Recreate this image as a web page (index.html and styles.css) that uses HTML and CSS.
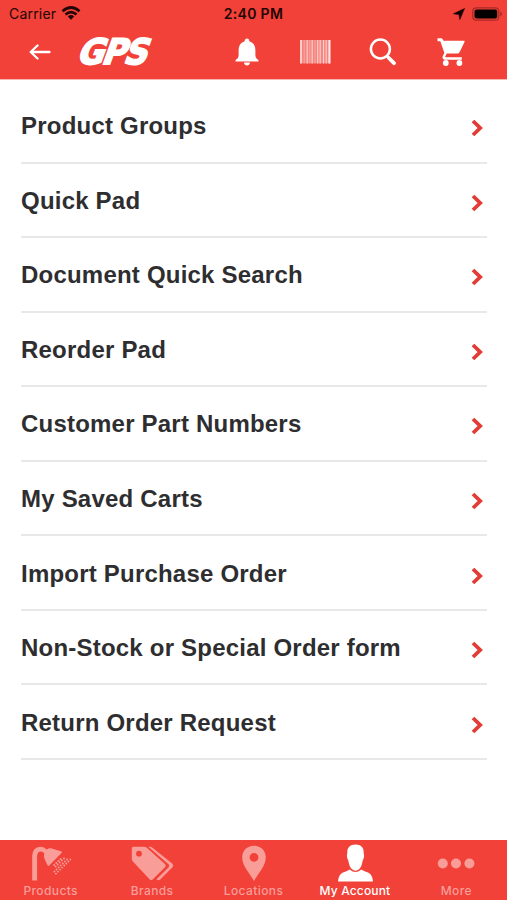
FILE: index.html
```
<!DOCTYPE html>
<html lang="en">

<head>
    <meta charset="UTF-8">
    <meta name="viewport" content="width=device-width, initial-scale=1.0">
    <title>My Account</title>
    <link rel="stylesheet" href="styles.css">
</head>

<body>
    <header class="header">
        <div class="status-bar">
            <div class="carrier">
                <span>Carrier</span>
                <svg width="20" height="15" viewBox="0 0 20 15" fill="none" stroke="#230605" stroke-width="2.7">
                    <path d="M1.5 5.2Q10-2.2 18.5 5.2M4.5 8.5Q10 3.6 15.5 8.5" />
                    <path d="M6.8 10.4Q10 7.8 13.2 10.4L10 13.8Z" fill="#230605" stroke="none" />
                </svg>
            </div>
            <div class="time">2:40 PM</div>
            <div class="battery">
                <svg width="12" height="12" viewBox="0 0 12 12" fill="#150202" stroke="#150202" stroke-width=".6">
                    <path d="M11.5.5L6.8 11.5L6 6.5L.5 5.8Z" />
                </svg>
                <svg width="31" height="14" viewBox="0 0 31 14">
                    <rect x=".8" y=".8" width="26" height="12.4" rx="3.5" fill="none" stroke="#a92a26" stroke-width="1.2" />
                    <rect x="2.5" y="2.4" width="22.7" height="9.2" rx="2" fill="#050000" />
                    <path d="M28.2 4.7Q30 5.3 30 7T28.2 9.3Z" fill="#a92a26" />
                </svg>
            </div>
        </div>
        <nav class="toolbar">
            <a href="#back" class="back" aria-label="Back">
                <svg width="22" height="16" viewBox="0 0 22 16" fill="none" stroke="#fff" stroke-width="2.3" stroke-linecap="round" stroke-linejoin="round">
                    <path d="M8.5 1.5L1.7 8L8.5 14.5M2 8H20.5" />
                </svg>
            </a>
            <a href="#home" class="logo">GPS</a>
            <ul class="actions">
                <li><a href="#alerts" aria-label="Alerts">
                    <svg width="24" height="28" viewBox="0 0 24 28" fill="#fff">
                        <path d="M12 .5Q14.2.5 14.3 3.2Q20.2 4.8 20.4 12V18Q20.5 20.8 23.5 22.2V23.5H.5V22.2Q3.5 20.8 3.6 18V12Q3.8 4.8 9.7 3.2Q9.8.5 12 .5ZM9 24.6H15Q14.6 27.5 12 27.5T9 24.6Z" />
                    </svg>
                </a></li>
                <li><a href="#scan" aria-label="Scan">
                    <svg width="31" height="24" viewBox="0 0 31 24" stroke="#fff">
                        <rect width="31" height="23.5" fill="#fff" opacity=".35" stroke="none" />
                        <path d="M1 0V23.5" stroke-width="1.5" opacity=".8" />
                        <path d="M29.3 0V23.5" stroke-width="1.8" opacity=".8" />
                        <path d="M7.2 0V23.5M12.2 0V23.5M17.7 0V23.5M20.2 0V23.5M23.5 0V23.5M26.2 0V23.5" stroke-width="1.2" opacity=".6" />
                        <path d="M4.2 0V23.5M9.8 0V23.5M15 0V23.5" stroke-width="1" opacity=".3" />
                    </svg>
                </a></li>
                <li><a href="#search" aria-label="Search">
                    <svg width="28" height="28" viewBox="0 0 28 28" fill="none" stroke="#fff">
                        <circle cx="11.4" cy="11" r="9.5" stroke-width="2.5" />
                        <path d="M17.8 18L20 20.2" stroke-width="2.4" />
                        <path d="M19.8 20L25 25.2" stroke-width="3.8" stroke-linecap="round" />
                    </svg>
                </a></li>
                <li><a href="#cart" aria-label="Cart">
                    <svg width="28" height="28" viewBox="0 0 28 28" fill="#fff">
                        <path d="M.5.3H4.3Q5.3.3 5.7 1.3L6.4 2.8H27.5V4L22.7 14Q21.9 15.5 20.2 15.5H9.8L8.3 18.2Q8 19.2 9 19.2H24.8V21.7H8Q5.3 21.5 5.5 19Q5.6 17.8 7.4 15L3.3 3.3H.5Z" />
                        <circle cx="8.8" cy="25" r="2.9" />
                        <circle cx="22.4" cy="25" r="2.9" />
                    </svg>
                </a></li>
            </ul>
        </nav>
    </header>

    <main class="menu">
        <a href="#groups" class="menu-item"><span>Product Groups</span><svg class="chevron" viewBox="0 0 12 18"><path d="M2 2L9.2 9L2 16" /></svg></a>
        <a href="#quick-pad" class="menu-item"><span>Quick Pad</span><svg class="chevron" viewBox="0 0 12 18"><path d="M2 2L9.2 9L2 16" /></svg></a>
        <a href="#documents" class="menu-item"><span>Document Quick Search</span><svg class="chevron" viewBox="0 0 12 18"><path d="M2 2L9.2 9L2 16" /></svg></a>
        <a href="#reorder" class="menu-item"><span>Reorder Pad</span><svg class="chevron" viewBox="0 0 12 18"><path d="M2 2L9.2 9L2 16" /></svg></a>
        <a href="#part-numbers" class="menu-item"><span>Customer Part Numbers</span><svg class="chevron" viewBox="0 0 12 18"><path d="M2 2L9.2 9L2 16" /></svg></a>
        <a href="#saved-carts" class="menu-item"><span>My Saved Carts</span><svg class="chevron" viewBox="0 0 12 18"><path d="M2 2L9.2 9L2 16" /></svg></a>
        <a href="#import" class="menu-item"><span>Import Purchase Order</span><svg class="chevron" viewBox="0 0 12 18"><path d="M2 2L9.2 9L2 16" /></svg></a>
        <a href="#special-order" class="menu-item"><span>Non-Stock or Special Order form</span><svg class="chevron" viewBox="0 0 12 18"><path d="M2 2L9.2 9L2 16" /></svg></a>
        <a href="#returns" class="menu-item"><span>Return Order Request</span><svg class="chevron" viewBox="0 0 12 18"><path d="M2 2L9.2 9L2 16" /></svg></a>
    </main>

    <nav class="tab-bar">
        <a href="#products" class="tab">
            <svg width="40" height="40" viewBox="0 0 40 40" fill="currentColor">
                <path d="M1.2 37.5V13Q1.5 4 9.5 3.8Q13.5 3.8 15.6 6.4Q19 4 23 6.2L30.7 8.6Q31.3 9.2 30.5 10L18 22.7Q17 23.3 16.5 22.2L13.5 15.7Q12.3 13.2 13.3 10.4Q12.2 8.4 9.6 8.4Q6.3 8.6 6.1 13V37.5Z" />
                <g fill="none" stroke="currentColor" stroke-width="1.9" stroke-linecap="round" stroke-dasharray="0 2.9">
                    <path d="M29.5 16L22.5 22.5M33 15.5L22.5 25.5M39.5 16.5L23 32.5" />
                    <path d="M36 16.5L23 29" />
                </g>
            </svg>
            <span>Products</span>
        </a>
        <a href="#brands" class="tab">
            <svg width="44" height="40" viewBox="0 0 44 40" fill="currentColor">
                <path fill-rule="evenodd" d="M3.5 3.8H14.2Q15.7 3.8 16.8 4.8L35.2 21.3Q36.4 22.7 35.2 24L22.4 36.7Q21 37.7 19.8 36.5L2.9 18.6Q1.8 17.3 1.8 16V5.5Q1.8 3.8 3.5 3.8ZM9 7.8A2.9 2.9 0 1 0 9 13.6A2.9 2.9 0 1 0 9 7.8Z" />
                <path d="M18.3 3.8H21.2L42.5 20.8Q44 22.6 42.5 24.2L30 36.8Q28 38 26.5 36.2L38.2 24.7Q40 22.6 38.2 20.9Z" />
            </svg>
            <span>Brands</span>
        </a>
        <a href="#locations" class="tab">
            <svg width="40" height="40" viewBox="0 0 40 40" fill="currentColor">
                <path fill-rule="evenodd" d="M20 2.8C13 2.8 8.2 7.8 8.2 14.4C8.2 23 16 30.5 20 38C24 30.5 31.8 23 31.8 14.4C31.8 7.8 27 2.8 20 2.8ZM20 10A4.4 4.4 0 1 1 20 18.8A4.4 4.4 0 1 1 20 10Z" />
            </svg>
            <span>Locations</span>
        </a>
        <a href="#account" class="tab active">
            <svg width="40" height="40" viewBox="0 0 40 40" fill="currentColor">
                <path d="M20.5 1.5C26 1.5 29 4.5 28.7 10C29.6 13 28.8 15.5 27.7 17.5Q26.8 23.5 24.3 26Q20.5 29.3 16.7 26Q14.2 23.5 13.3 17.5C12.2 15.5 11.4 13 12.3 10C12 4.5 15 1.5 20.5 1.5Z" />
                <path d="M14.7 26.5Q20.5 31.5 26.3 26.5Q29.5 28.5 33 29.5Q37.5 31.5 38 38.5H3Q3.5 31.5 8 29.5Q11.5 28.5 14.7 26.5Z" />
            </svg>
            <span>My Account</span>
        </a>
        <a href="#more" class="tab">
            <svg width="40" height="40" viewBox="0 0 40 40" fill="currentColor">
                <circle cx="6.8" cy="20.5" r="5" />
                <circle cx="20" cy="20.5" r="5" />
                <circle cx="33.4" cy="20.5" r="5" />
            </svg>
            <span>More</span>
        </a>
    </nav>
</body>

</html>
```

FILE: styles.css
```
* {
    box-sizing: border-box;
}

body {
    display: flex;
    flex-direction: column;
    height: 900px;
    margin: 0;
    overflow: hidden;
    background-color: #fff;
    font-family: 'Liberation Sans', Arial, sans-serif;
}

a {
    color: inherit;
    text-decoration: none;
}

svg {
    display: block;
    flex-shrink: 0;
}

/* Header */
.header {
    height: 80px;
    flex-shrink: 0;
    border-bottom: 1px solid #f9b5b1;
    background-color: #f14138;
}

.status-bar {
    display: grid;
    grid-template-columns: 1fr auto 1fr;
    align-items: center;
    height: 27px;
    padding: 0 4px 0 9px;
    font-family: Inter, sans-serif;
    font-size: 14px;
    color: #230605;
}

.carrier {
    display: flex;
    align-items: center;
    gap: 5px;
    letter-spacing: 0.2px;
}

.time {
    padding-right: 5px;
    font-weight: 600;
    letter-spacing: 0.3px;
}

.battery {
    display: flex;
    align-items: center;
    justify-content: flex-end;
    gap: 5px;
}

.battery svg:first-child {
    margin-right: 2px;
}

.toolbar {
    display: flex;
    align-items: center;
    height: 50px;
    padding: 0 22px 0 29px;
}

.logo {
    width: 73px;
    margin-left: 29px;
    font-family: 'DejaVu Sans', sans-serif;
    font-size: 35px;
    font-weight: bold;
    line-height: 50px;
    letter-spacing: -2px;
    color: #fff;
    -webkit-text-stroke: 1.8px #fff;
    transform: skewX(-20deg) scaleX(0.93);
    transform-origin: left center;
}

.actions {
    display: flex;
    justify-content: space-between;
    width: 272px;
    margin: 0 0 0 auto;
    padding: 0;
    list-style: none;
}

.actions li,
.actions a {
    display: flex;
    align-items: center;
    justify-content: center;
    width: 68px;
}

/* Menu list */
.menu {
    flex: 1;
    padding: 9px 20px 0 21px;
}

.menu-item {
    display: flex;
    align-items: center;
    justify-content: space-between;
    height: 74.55px;
    padding: 2px 4px 0 0;
    border-bottom: 2px solid #e8e8e8;
    font-size: 24px;
    font-weight: bold;
    letter-spacing: 0.21px;
    color: #2e2e30;
}

.chevron {
    width: 12px;
    height: 18px;
    margin-top: 4px;
    fill: none;
    stroke: #e23c34;
    stroke-width: 3.8;
}

/* Bottom tabs */
.tab-bar {
    display: flex;
    height: 60px;
    flex-shrink: 0;
    background-color: #f14138;
}

.tab {
    display: flex;
    flex: 1;
    flex-direction: column;
    align-items: center;
    padding-top: 3px;
    font-family: Inter, sans-serif;
    font-size: 12px;
    font-weight: 500;
    line-height: 16px;
    letter-spacing: 0.4px;
    color: #f99d99;
}

.tab.active {
    letter-spacing: 0.15px;
    color: #fff;
}
```
